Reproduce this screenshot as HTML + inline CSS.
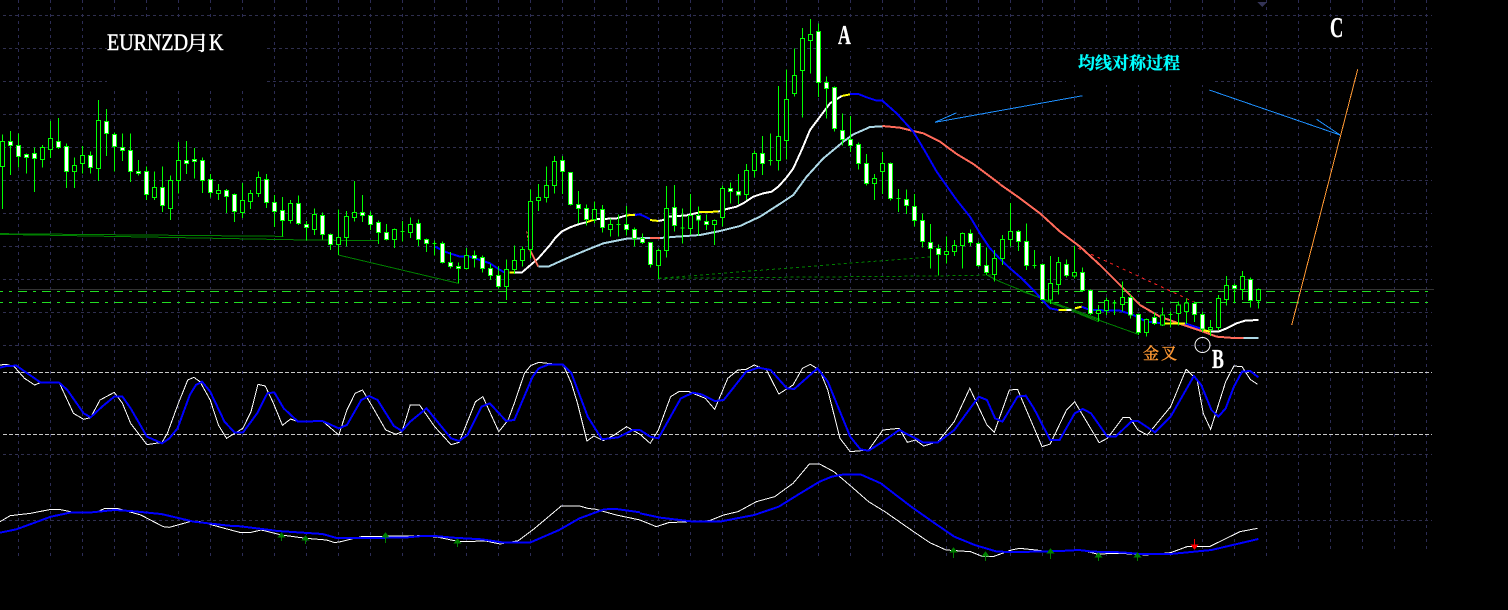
<!DOCTYPE html>
<html><head><meta charset="utf-8"><title>EURNZD</title>
<style>
html,body{margin:0;padding:0;background:#000}
svg{display:block}
svg *{vector-effect:non-scaling-stroke;shape-rendering:crispEdges}
.n{fill:none}
.s{font-family:"Liberation Serif","Noto Serif CJK SC",serif;fill:#fff;stroke:#fff;stroke-width:.4px}
.b{font-weight:700;stroke-width:.2px}
</style></head>
<body>
<svg width="1508" height="610" viewBox="0 0 1508 610" xmlns="http://www.w3.org/2000/svg">
<rect width="1508" height="610" fill="#000"/>
<!-- grid -->
<path class="n" stroke="#2c2c55" stroke-dasharray="3 4" d="M18.5 0V560M50.5 0V560M82.5 0V560M114.5 0V560M146.5 0V560M178.5 0V560M210.5 0V560M242.5 0V560M274.5 0V560M306.5 0V560M338.5 0V560M370.5 0V560M402.5 0V560M434.5 0V560M466.5 0V560M498.5 0V560M530.5 0V560M562.5 0V560M594.5 0V560M626.5 0V560M658.5 0V560M690.5 0V560M722.5 0V560M754.5 0V560M786.5 0V560M818.5 0V560M850.5 0V560M882.5 0V560M914.5 0V560M946.5 0V560M978.5 0V560M1010.5 0V560M1042.5 0V560M1074.5 0V560M1106.5 0V560M1138.5 0V560M1170.5 0V560M1202.5 0V560M1234.5 0V560M1266.5 0V560M1298.5 0V550M1330.5 0V550M1362.5 0V550M1394.5 0V550M1426.5 0V550"/>
<path class="n" stroke="#2f2f4f" stroke-dasharray="3 3" d="M3 15.5H1432M3 48.5H1432M3 81.5H1432M3 114.5H1432M3 147.5H1432M3 180.5H1432M3 213.5H1432M3 246.5H1432M3 279.5H1432M3 312.5H1432M3 345.5H1432M3 454.5H1432M3 520.5H1432"/>
<!-- text background boxes -->
<rect x="107" y="17" width="160" height="70" fill="#000"/>
<rect x="832" y="17" width="33" height="34" fill="#000"/>
<rect x="1320" y="17" width="35" height="30" fill="#000"/>
<rect x="1066" y="50" width="147" height="35" fill="#000"/>
<path d="M1257 2h10l-5 5z" fill="#333355"/>
<!-- level lines -->
<path class="n" stroke="#333" d="M18 289.5H1434"/>
<path class="n" stroke="#22dd22" stroke-dasharray="9 6 3 6" stroke-dashoffset="6" d="M0 291.5H1428M0 302.5H1428"/>
<path class="n" stroke="#c8c8c8" stroke-dasharray="4 2" d="M3 372.5H1432M3 434.5H1432"/>

<!-- group 1 -->
<g transform="scale(.33333)">
<g stroke="#008000" fill="none">
<polyline points="0,701 850,709"/>
<polyline points="0,703 920,720 1135,722"/>
<polyline points="1015,765 1375,850"/>
</g>
<polyline class="n" stroke="#0000ff" stroke-width="2" points="1305,740 1340,757 1380,770 1410,770 1470,790 1500,810"/>
<path class="n" stroke="#00ff00" d="M7.5 403V627M31.5 393V525M55.5 400V502M79.5 460V520M103.5 442V576M127.5 435V502M151.5 363V474M175.5 354V447M199.5 430V564M223.5 472V564M247.5 438V520M271.5 454V520M295.5 300V543M319.5 327V468M343.5 397V514M367.5 400V483M391.5 400V546M415.5 480V526M439.5 500V600M463.5 514V600M487.5 499V636M511.5 526V660M535.5 426V580M559.5 423V522M583.5 444V535M607.5 472V579M631.5 522V593M655.5 552V600M679.5 567V639M703.5 580V666M727.5 549V654M751.5 570V627M775.5 514V591M799.5 522V624M823.5 585V681M847.5 591V710M871.5 600V671M895.5 586V675M919.5 663V722M943.5 625V705M967.5 637V718M991.5 700V750M1015.5 628V765M1039.5 633V740M1063.5 543V664M1087.5 585V666M1111.5 634V690M1135.5 661V732M1159.5 672V722M1183.5 685V744M1207.5 663V724M1231.5 652V714M1255.5 658V738M1279.5 715V756M1303.5 721V767M1327.5 724V791M1351.5 756V805M1375.5 787V851M1399.5 744V808M1423.5 751V802M1447.5 767V818M1471.5 792V840M1495.5 798V865M1201.5 695h12M1297.5 731h12"/>
<path fill="#000" stroke="#00ff00" d="M1.5 425h12v75h-12zM121.5 442h12v37h-12zM145.5 415h12v34h-12zM217.5 497h12v18h-12zM241.5 466h12v25h-12zM289.5 361h12v145h-12zM457.5 562h12v31h-12zM505.5 542h12v83h-12zM529.5 481h12v60h-12zM649.5 572h12v8h-12zM721.5 601h12v37h-12zM745.5 580h12v25h-12zM769.5 532h12v48h-12zM865.5 610h12v52h-12zM937.5 643h12v46h-12zM1009.5 713h12v20h-12zM1033.5 650h12v63h-12zM1057.5 637h12v16h-12zM1177.5 689h12v29h-12zM1225.5 673h12v25h-12zM1393.5 767h12v39h-12z"/>
<path fill="#fff" stroke="#00ff00" d="M25.5 425h12v11h-12zM49.5 437h12v32h-12zM73.5 463h12v9h-12zM97.5 461h12v14h-12zM169.5 425h12v17h-12zM193.5 440h12v74h-12zM265.5 467h12v35h-12zM313.5 365h12v35h-12zM337.5 404h12v35h-12zM361.5 443h12v8h-12zM385.5 452h12v62h-12zM409.5 515h12v6h-12zM433.5 515h12v68h-12zM481.5 562h12v55h-12zM553.5 482h12v8h-12zM577.5 478h12v6h-12zM601.5 482h12v59h-12zM625.5 539h12v38h-12zM673.5 572h12v17h-12zM697.5 584h12v51h-12zM793.5 539h12v68h-12zM817.5 607h12v28h-12zM841.5 632h12v29h-12zM889.5 611h12v60h-12zM913.5 674h12v8h-12zM961.5 647h12v56h-12zM985.5 704h12v29h-12zM1081.5 638h12v8h-12zM1105.5 647h12v26h-12zM1129.5 668h12v29h-12zM1153.5 698h12v20h-12zM1249.5 670h12v48h-12zM1273.5 719h12v11h-12zM1321.5 731h12v57h-12zM1345.5 788h12v12h-12zM1369.5 799h12v7h-12zM1417.5 767h12v8h-12zM1441.5 773h12v32h-12zM1465.5 806h12v20h-12zM1489.5 827h12v33h-12z"/>
</g>

<!-- group 2 -->
<g transform="translate(500 0) scale(.33333)">
<g stroke="#008000" fill="none" stroke-dasharray="3 3">
<polyline points="475,835 1300,770"/>
<polyline points="475,835 1300,828 1480,825"/>
</g>
<polyline class="n" stroke="#008000" points="1460,825 1500,845"/>
<g fill="none" stroke-width="2">
<polyline stroke="#0000ff" points="-3,808 15,818"/>
<polyline stroke="#ffff00" points="28,818 45,818"/>
<polyline stroke="#fff" points="45,818 65,818 115,775 150,735 165,715 185,695 210,682 235,673 262,666"/>
<polyline stroke="#ffff00" points="262,666 285,658"/>
<polyline stroke="#fff" points="285,658 350,655 380,646"/>
<polyline stroke="#ffff00" points="380,646 405,645"/>
<polyline stroke="#0000ff" points="405,645 420,643 450,657"/>
<polyline stroke="#ffff00" points="450,660 475,663"/>
<polyline stroke="#fff" points="475,663 490,660 505,650 560,646 595,638"/>
<polyline stroke="#ffff00" points="595,636 655,635"/>
<polyline stroke="#fff" points="655,635 680,627 710,620 730,610 760,590 790,580 815,575 835,560 860,532 880,505 905,450 930,390 960,350 990,310 1025,288"/>
<polyline stroke="#ffff00" points="1025,288 1050,283"/>
<polyline stroke="#ff6a5a" points="90,750 115,800"/>
<polyline stroke="#ff6a5a" stroke-width="1" stroke-dasharray="2 2" points="80,695 90,750"/>
<polyline stroke="#add8e6" points="115,800 145,800 200,775 260,750 310,730 380,716 450,714"/>
<polyline stroke="#ff6a5a" points="450,714 480,714"/>
<polyline stroke="#add8e6" points="480,714 530,710 600,705 660,693 720,678 780,650 850,605 880,585 920,530 970,475 1030,425 1060,403 1090,390 1110,381 1147,379"/>
<polyline stroke="#ff6a5a" points="1147,378 1200,383 1240,393 1270,400 1320,425 1370,462 1420,492 1500,552"/>
<polyline stroke="#0000ff" points="1050,282 1075,282 1100,292 1130,302 1147,302 1190,340 1240,395 1270,445 1310,515 1370,600 1410,650 1440,700 1470,745 1500,777"/>
</g>
<path class="n" stroke="#00ff00" d="M19.5 778V900M43.5 737V822M67.5 740V800M91.5 568V776M115.5 552V633M139.5 499V608M163.5 468V581M187.5 468V582M211.5 516V617M235.5 573V670M259.5 613V676M283.5 604V670M307.5 615V698M331.5 655V710M355.5 643V710M379.5 618V706M403.5 682V740M427.5 700V732M451.5 727V803M475.5 745V837M499.5 558V773M523.5 555V695M547.5 625V731M571.5 582V705M595.5 620V706M619.5 643V690M643.5 658V735M667.5 556V680M691.5 547V610M715.5 522V612M739.5 492V600M763.5 452V532M787.5 408V525M811.5 400V497M835.5 258V512M859.5 208V478M883.5 145V290M907.5 84V353M931.5 57V221M955.5 70V291M979.5 230V356M1003.5 260V395M1027.5 340V437M1051.5 348V456M1075.5 427V508M1099.5 462V556M1123.5 522V600M1147.5 456V582M1171.5 488V602M1195.5 567V636M1219.5 568V642M1243.5 582V680M1267.5 641V742M1291.5 672V806M1315.5 733V826M1339.5 710V790M1363.5 720V768M1387.5 697V806M1411.5 688V738M1435.5 725V801M1459.5 743V825M1483.5 750V845M349.5 674h12M541.5 684h12M805.5 482h12M1189.5 595h12"/>
<path fill="#000" stroke="#00ff00" d="M13.5 808h12v52h-12zM37.5 781h12v27h-12zM61.5 748h12v33h-12zM85.5 604h12v145h-12zM109.5 592h12v9h-12zM133.5 556h12v37h-12zM157.5 484h12v72h-12zM277.5 628h12v30h-12zM325.5 673h12v15h-12zM469.5 751h12v45h-12zM493.5 625h12v126h-12zM565.5 646h12v39h-12zM637.5 661h12v12h-12zM661.5 565h12v87h-12zM733.5 511h12v72h-12zM757.5 460h12v51h-12zM829.5 409h12v72h-12zM853.5 298h12v124h-12zM877.5 226h12v55h-12zM901.5 115h12v97h-12zM925.5 103h12v18h-12zM1117.5 535h12v16h-12zM1141.5 490h12v25h-12zM1333.5 755h12v9h-12zM1357.5 737h12v18h-12zM1381.5 700h12v37h-12zM1477.5 775h12v49h-12z"/>
<path fill="#fff" stroke="#00ff00" d="M181.5 482h12v32h-12zM205.5 518h12v95h-12zM229.5 614h12v11h-12zM253.5 625h12v34h-12zM301.5 629h12v53h-12zM373.5 674h12v14h-12zM397.5 688h12v27h-12zM421.5 715h12v12h-12zM445.5 728h12v66h-12zM517.5 623h12v53h-12zM589.5 647h12v13h-12zM613.5 665h12v8h-12zM685.5 566h12v8h-12zM709.5 575h12v10h-12zM781.5 461h12v29h-12zM949.5 94h12v154h-12zM973.5 247h12v18h-12zM997.5 262h12v123h-12zM1021.5 391h12v27h-12zM1045.5 419h12v18h-12zM1069.5 433h12v57h-12zM1093.5 490h12v61h-12zM1165.5 490h12v106h-12zM1213.5 598h12v18h-12zM1237.5 619h12v42h-12zM1261.5 661h12v64h-12zM1285.5 728h12v17h-12zM1309.5 745h12v19h-12zM1405.5 700h12v28h-12zM1429.5 730h12v67h-12zM1453.5 796h12v22h-12z"/>
</g>

<!-- group 3 -->
<g transform="translate(1000 0) scale(.33333)">
<g fill="none" stroke="#008000">
<polyline points="0,845 295,965"/>
<polyline points="127,900 415,1003"/>
<polyline points="60,872 300,958"/>
</g>
<polyline class="n" stroke="#ff2222" stroke-dasharray="3 4" points="235,745 580,905"/>
<g fill="none" stroke-width="2">
<polyline stroke="#ff6a5a" points="0,553 60,595 120,640 180,695 240,740 300,795 360,855 420,915 480,950 550,975 610,995 650,1010 700,1014 730,1014"/>
<polyline stroke="#add8e6" points="730,1014 775,1014"/>
<polyline stroke="#0000ff" points="0,777 30,805 65,835 100,870 127,900 150,925 175,930"/>
<polyline stroke="#ffff00" points="175,930 200,930"/>
<polyline stroke="#fff" points="200,930 215,930"/>
<polyline stroke="#ffff00" points="225,925 245,920"/>
<polyline stroke="#0000ff" points="245,920 270,930 360,932 400,945 440,965 490,970"/>
<polyline stroke="#ffff00" points="490,970 555,970"/>
<polyline stroke="#0000ff" points="555,970 600,985"/>
<polyline stroke="#ffff00" points="610,990 630,995"/>
<polyline stroke="#fff" points="630,995 655,995 680,985 710,970 735,962 775,960"/>
</g>
<path class="n" stroke="#00ff00" d="M7.5 705V795M31.5 609V740M55.5 690V753M79.5 670V810M103.5 750V805M127.5 790V900M151.5 768V912M175.5 771V884M199.5 778V832M223.5 738V836M247.5 802V875M271.5 868V945M295.5 915V965M319.5 893V945M343.5 900V945M367.5 845V935M391.5 885V955M415.5 940V1005M439.5 955V1010M463.5 937V975M487.5 922V978M511.5 935V983M535.5 905V976M559.5 895V972M583.5 905V966M607.5 935V996M631.5 960V1008M655.5 885V990M679.5 828V917M703.5 850V909M727.5 813V900M751.5 832V922M775.5 866V926M97.5 796h12M337.5 909h12M505.5 943h12"/>
<path fill="#000" stroke="#00ff00" d="M1.5 719h12v57h-12zM25.5 694h12v25h-12zM145.5 851h12v49h-12zM169.5 787h12v66h-12zM217.5 818h12v10h-12zM289.5 931h12v9h-12zM313.5 901h12v30h-12zM361.5 892h12v21h-12zM433.5 958h12v39h-12zM481.5 945h12v30h-12zM529.5 915h12v26h-12zM553.5 909h12v26h-12zM625.5 983h12v6h-12zM649.5 896h12v87h-12zM673.5 857h12v41h-12zM721.5 829h12v40h-12zM769.5 869h12v32h-12z"/>
<path fill="#fff" stroke="#00ff00" d="M49.5 694h12v30h-12zM73.5 724h12v72h-12zM121.5 793h12v105h-12zM193.5 794h12v33h-12zM241.5 817h12v55h-12zM265.5 871h12v69h-12zM385.5 892h12v53h-12zM409.5 944h12v54h-12zM457.5 953h12v17h-12zM577.5 910h12v33h-12zM601.5 944h12v43h-12zM697.5 857h12v9h-12zM745.5 838h12v64h-12z"/>
</g>

<!-- drawn lines -->
<g fill="none" stroke="#1e90ff">
<polyline points="956.7,112.7 935,122.3 1082.7,95.7"/>
<polyline points="1209.3,90 1340,135 1316.7,119.3"/>
</g>
<line x1="1291.7" y1="325" x2="1357.7" y2="69.3" stroke="#ff9933"/>
<circle cx="1202.5" cy="345" r="7.5" fill="none" stroke="#fff" style="shape-rendering:auto"/>

<!-- oscillators left -->
<g transform="translate(0 350) scale(.40816 .33333)" fill="none">
<polyline stroke="#fff" points="0,45 15,43 35,50 60,85 85,105 100,97 145,98 180,190 205,208 222,203 245,150 280,127 300,160 320,220 360,284 397,277 410,250 437,160 460,90 475,82 490,95 515,150 535,225 555,265 595,235 615,185 632,103 650,108 670,160 692,226 712,207 730,215 790,213 830,255 850,180 870,130 888,120 910,165 945,240 970,253 985,245 1005,165 1028,165 1065,230 1105,284 1125,277 1165,155 1183,140 1222,245 1245,210 1260,160 1285,70 1300,47 1320,37 1380,45 1400,100 1415,160 1438,273 1455,258 1478,272 1505,255 1535,230 1568,253"/>
<polyline stroke="#0000ff" stroke-width="2" points="0,53 15,48 40,47 100,98 145,98 165,120 205,190 222,202 250,170 280,140 300,140 320,175 360,260 397,280 415,265 435,235 465,135 480,105 495,95 515,125 550,215 575,248 595,248 630,190 655,130 672,127 695,175 730,215 790,213 830,235 850,225 885,150 905,138 925,150 965,228 985,243 1005,215 1045,175 1065,205 1105,265 1125,273 1145,255 1180,170 1200,160 1240,213 1260,210 1305,80 1320,55 1345,43 1378,43 1400,70 1440,200 1475,268 1515,262 1550,240 1568,240"/>
<polyline stroke="#fff" points="0,515 25,497 75,490 125,478 145,478 180,487 240,485 255,476 290,476 345,495 400,530 415,532 465,515 490,515 550,535 590,548 615,547 640,540 690,555 750,565 800,570 820,578 835,575 885,560 1035,557 1075,562 1125,575 1190,573 1225,582 1270,572 1310,535 1375,468 1420,468 1440,475 1460,478 1510,495 1568,510"/>
<polyline stroke="#0000ff" stroke-width="2" points="0,548 40,538 125,500 175,487 225,487 280,480 320,483 395,492 475,515 560,527 590,529 680,543 790,552 825,564 990,563 1035,558 1065,558 1110,563 1180,568 1230,577 1300,577 1370,540 1420,505 1480,478 1510,477 1568,487"/>
</g>
<!-- oscillators right -->
<g transform="translate(640 350) scale(.40816 .33333)" fill="none">
<polyline stroke="#fff" points="0,253 25,280 45,240 75,140 95,125 120,125 160,145 183,178 215,85 240,60 260,58 280,45 310,60 340,132 375,105 398,55 417,43 440,60 460,120 490,265 515,305 560,300 595,240 635,235 655,277 675,270 695,288 730,275 770,215 808,115 850,225 868,247 905,120 925,118 985,290 1005,282 1045,180 1065,155 1125,278 1145,265 1183,203 1200,203 1220,240 1243,255 1300,170 1338,58 1365,90 1380,190 1398,238 1435,95 1455,48 1475,50 1495,88 1513,103"/>
<polyline stroke="#0000ff" stroke-width="2" points="0,240 25,260 45,265 100,145 130,128 150,133 183,153 205,150 260,65 290,53 320,60 360,115 378,117 435,55 460,95 515,260 540,298 560,302 595,275 635,240 695,278 730,277 770,240 830,140 850,150 870,205 888,215 925,140 945,137 965,175 1005,270 1028,270 1065,190 1085,177 1105,190 1145,260 1165,260 1205,213 1220,213 1262,247 1300,200 1357,78 1375,105 1400,180 1417,200 1435,175 1455,110 1475,65 1495,63 1515,82"/>
<polyline stroke="#fff" points="0,510 40,530 70,518 170,512 205,495 240,485 285,455 330,440 375,400 415,342 440,342 475,365 520,412 560,455 600,485 655,532 710,578 750,600 810,605 840,620 865,620 910,600 930,595 970,600 1000,605 1080,600 1120,612 1175,610 1240,615 1300,608 1340,590 1395,590 1470,545 1513,535"/>
<polyline stroke="#0000ff" stroke-width="2" points="0,490 50,503 125,514 195,515 280,495 340,470 390,432 440,395 470,380 500,373 540,373 590,400 630,438 670,475 720,518 770,560 820,585 875,605 930,606 1030,603 1075,600 1110,605 1180,607 1225,612 1300,612 1400,600 1515,567"/>
</g>
<!-- signal arrows -->
<path fill="#008000" stroke="#008000" d="M281.5 533l3 4h-6zM281.5 533v8M305.5 536l3 4h-6zM305.5 536v8M385.5 533l3 4h-6zM385.5 533v10M457.5 539l3 4h-6zM457.5 539v8M953.5 548l3 4h-6zM953.5 548v10M985.5 552l3 4h-6zM985.5 552v9M1050.5 549l3 4h-6zM1050.5 549v10M1098.5 553l3 4h-6zM1098.5 553v8M1137.5 553l3 4h-6zM1137.5 553v8"/>
<path fill="#ff0000" stroke="#ff0000" d="M1194.5 549l3-4h-6zM1194.5 549v-10"/>

<!-- text -->
<text class="s" font-size="20" transform="translate(107 50) scale(1 1.18)">EURNZD</text>
<text class="s" font-size="19" transform="translate(185.5 50) scale(1.25 1.05)">月</text>
<text class="s" font-size="20" transform="translate(209 50) scale(1 1.18)">K</text>
<text class="s b" font-size="27" transform="translate(838 44) scale(.66 1)">A</text>
<text class="s b" font-size="27" transform="translate(1212 368) scale(.66 1)">B</text>
<text class="s b" font-size="28" transform="translate(1330 37) scale(.66 1)">C</text>
<text x="1078" y="69" font-size="17" font-weight="700" fill="#00ffff" stroke="#00ffff" stroke-width=".3" font-family="'Liberation Serif','Noto Serif CJK SC',serif">均线对称过程</text>
<text x="1143" y="359" font-size="16" letter-spacing="2" fill="#ff9933" stroke="#ff9933" stroke-width=".4" font-family="'Liberation Serif','Noto Serif CJK SC',serif">金叉</text>
</svg>
</body></html>
